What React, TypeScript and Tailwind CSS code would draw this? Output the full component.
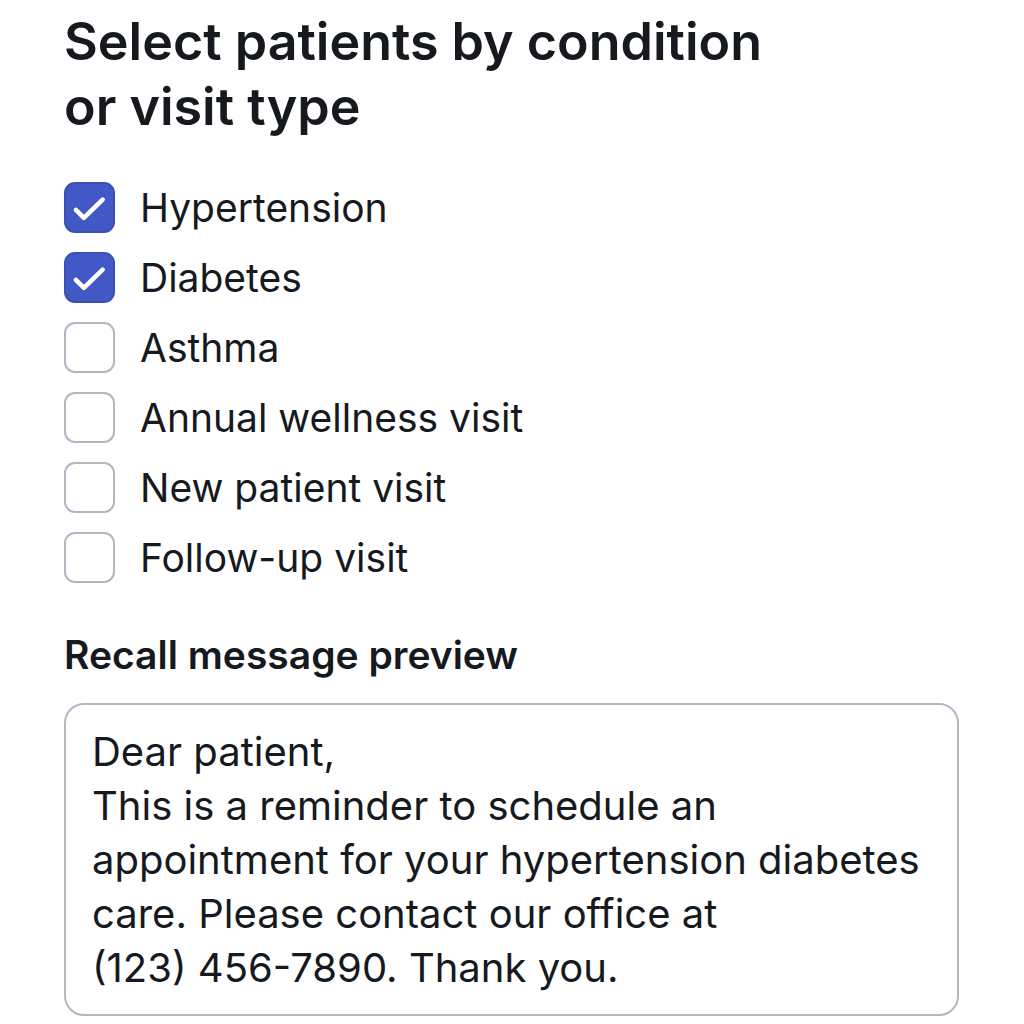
import React, { useState } from "react";

const options = [
  { id: "hypertension", label: "Hypertension", checked: true },
  { id: "diabetes", label: "Diabetes", checked: true },
  { id: "asthma", label: "Asthma", checked: false },
  { id: "annual", label: "Annual wellness visit", checked: false },
  { id: "new", label: "New patient visit", checked: false },
  { id: "followup", label: "Follow-up visit", checked: false },
];

function Box({ checked }: { checked: boolean }) {
  if (checked) {
    return (
      <span className="flex h-[51px] w-[51px] shrink-0 items-center justify-center rounded-[11px] border-2 border-[#3a50b6] bg-[#4258c7]">
        <svg width="48" height="48" viewBox="0 0 50 50" fill="none" stroke="white" strokeWidth="4.8" strokeLinecap="round" strokeLinejoin="round">
          <path d="M10.5 27l8.5 8.5L39 16" />
        </svg>
      </span>
    );
  }
  return <span className="h-[51px] w-[51px] shrink-0 rounded-[11px] border-2 border-[#b2b6c1] bg-white" />;
}

export default function App() {
  const [items, setItems] = useState(options);

  return (
    <main className="min-h-screen bg-white px-[64px] pt-[9px] text-[#16191d]" style={{ fontFamily: "Inter, 'Noto Sans', sans-serif" }}>
      <h1 className="text-[52px] font-semibold leading-[65px]">
        Select patients by condition
        <br />
        or visit type
      </h1>

      <div className="mt-[43px] flex flex-col gap-[19px]">
        {items.map((item) => (
          <label
            key={item.id}
            className="flex h-[51px] cursor-pointer items-center gap-[25px]"
            onClick={() =>
              setItems((prev) => prev.map((p) => (p.id === item.id ? { ...p, checked: !p.checked } : p)))
            }
          >
            <Box checked={item.checked} />
            <span className="text-[39px] leading-none">{item.label}</span>
          </label>
        ))}
      </div>

      <h2 className="mt-[52px] text-[39px] font-semibold leading-none">Recall message preview</h2>

      <div className="mt-[29px] h-[313px] w-[895px] rounded-[20px] border-2 border-[#b3b7c2] pl-[26px] pt-[20px] text-[40px] leading-[54px]">
        <p>Dear patient,</p>
        <p>
          This is a reminder to schedule an
          <br />
          appointment for your hypertension diabetes
          <br />
          care. Please contact our office at
          <br />
          (123) 456-7890. Thank you.
        </p>
      </div>
    </main>
  );
}
